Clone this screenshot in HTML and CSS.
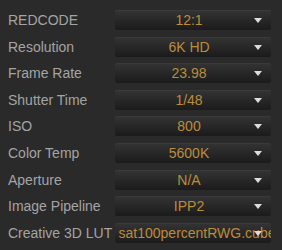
FILE: index.html
```html
<html lang="en">
<head>
<meta charset="utf-8">
<title>Camera Settings</title>
<link rel="stylesheet" href="styles.css">
</head>
<body>
    <div class="painel">
        <div class="rotulo">REDCODE</div>
        <div class="caixa"><span class="valor">12:1</span><span class="seta"></span></div>

        <div class="rotulo">Resolution</div>
        <div class="caixa"><span class="valor">6K HD</span><span class="seta"></span></div>

        <div class="rotulo">Frame Rate</div>
        <div class="caixa"><span class="valor">23.98</span><span class="seta"></span></div>

        <div class="rotulo">Shutter Time</div>
        <div class="caixa"><span class="valor">1/48</span><span class="seta"></span></div>

        <div class="rotulo">ISO</div>
        <div class="caixa"><span class="valor">800</span><span class="seta"></span></div>

        <div class="rotulo">Color Temp</div>
        <div class="caixa"><span class="valor">5600K</span><span class="seta"></span></div>

        <div class="rotulo">Aperture</div>
        <div class="caixa"><span class="valor">N/A</span><span class="seta"></span></div>

        <div class="rotulo">Image Pipeline</div>
        <div class="caixa"><span class="valor">IPP2</span><span class="seta"></span></div>

        <div class="rotulo">Creative 3D LUT</div>
        <div class="caixa"><span class="valor longo">sat100percentRWG.cube</span><span class="seta"></span></div>
    </div>
</body>
</html>
```

FILE: styles.css
```css
*{
    margin:0;
    padding:0;
    box-sizing:border-box;
}
body{
    background:#2a2a2a;
    font-family:"Liberation Sans", Arial, sans-serif;
    font-size:14px;
}
.painel{
    display:grid;
    grid-template-columns:107px 156px;
    grid-auto-rows:20px;
    row-gap:6.6px;
    padding:10px 0 0 8px;
}
.rotulo{
    color:#a4a4a4;
    line-height:20px;
    white-space:nowrap;
}
.caixa{
    position:relative;
    display:flex;
    justify-content:center;
    align-items:center;
    overflow:hidden;
    background:linear-gradient(#343434, #1b1b1b);
    border-radius:2px;
    box-shadow:inset 0 1px 0 #3a3a3a;
}
.valor{
    color:#bb8c3a;
    white-space:nowrap;
    padding-right:8px;
}
.longo{
    padding-right:0;
    margin-left:8px;
}
.seta{
    position:absolute;
    right:9px;
    top:8px;
    width:0;
    height:0;
    border-left:4px solid transparent;
    border-right:4px solid transparent;
    border-top:5px solid #dcdcdc;
}
```
